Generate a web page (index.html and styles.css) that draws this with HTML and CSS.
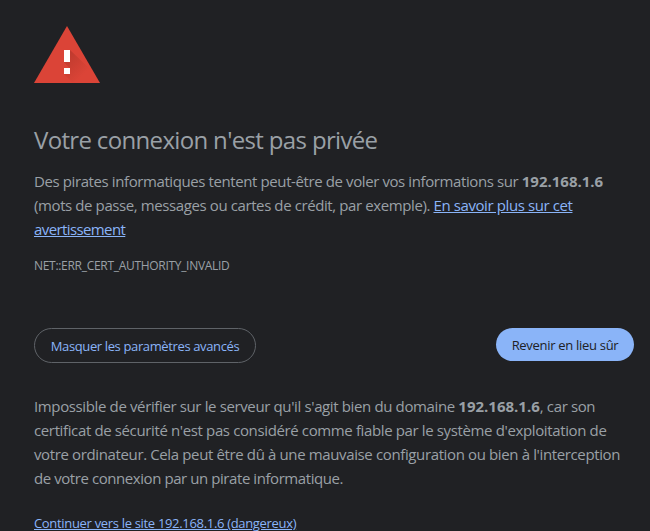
FILE: index.html
```html
<!DOCTYPE html>
<html lang="fr">
<head>
<meta charset="utf-8">
<title>Erreur liée à la confidentialité</title>
<link rel="stylesheet" href="styles.css">
</head>
<body>
<main class="interstitial">
  <svg class="icon" width="66" height="57" viewBox="0 0 66 57" aria-hidden="true">
    <defs>
      <linearGradient id="shade" gradientUnits="userSpaceOnUse" x1="32" y1="30" x2="50" y2="48">
        <stop offset="0" stop-color="#b8382c" stop-opacity=".8"/>
        <stop offset="1" stop-color="#b8382c" stop-opacity="0"/>
      </linearGradient>
    </defs>
    <path d="M33 0 66 57H0z" fill="#db4437"/>
    <path d="M36 24 60 47l6 10H49L30 36h6zM36 42 51 57H39l-9-9z" fill="url(#shade)"/>
    <path d="M30 24h6v12h-6zM30 42h6v6h-6z" fill="#fff"/>
  </svg>
  <h1>Votre connexion n'est pas privée</h1>
  <p class="text intro">
    <span class="line">Des pirates informatiques tentent peut-être de voler vos informations sur <strong>192.168.1.6</strong></span>
    <span class="line">(mots de passe, messages ou cartes de crédit, par exemple). <a href="#">En savoir plus sur cet</a></span>
    <span class="line last"><a href="#">avertissement</a></span>
  </p>
  <div class="code">NET::ERR_CERT_AUTHORITY_INVALID</div>
  <div class="actions">
    <button class="btn secondary">Masquer les paramètres avancés</button>
    <button class="btn primary">Revenir en lieu sûr</button>
  </div>
  <p class="text details">
    <span class="line">Impossible de vérifier sur le serveur qu'il s'agit bien du domaine <strong>192.168.1.6</strong>, car son</span>
    <span class="line">certificat de sécurité n'est pas considéré comme fiable par le système d'exploitation de</span>
    <span class="line">votre ordinateur. Cela peut être dû à une mauvaise configuration ou bien à l'interception</span>
    <span class="line last">de votre connexion par un pirate informatique.</span>
  </p>
  <a class="proceed" href="#">Continuer vers le site 192.168.1.6 (dangereux)</a>
</main>
</body>
</html>
```

FILE: styles.css
```css
body {
  margin: 0;
  height: 531px;
  overflow: hidden;
  background: #202124;
  color: #9aa0a6;
  font-family: "Open Sans", "Noto Sans", sans-serif;
}
.interstitial { padding: 26px 16px 0 34px; }
.icon { display: block; }
h1 {
  margin: 42px 0 14px;
  font-size: 24px;
  line-height: 30px;
  font-weight: 400;
  letter-spacing: -0.66px;
  white-space: nowrap;
}
.text { margin: 0; font-size: 15px; line-height: 24px; letter-spacing: -0.37px; }
.intro { letter-spacing: -0.4px; }
.intro .last { letter-spacing: -0.6px; }
.details .last { letter-spacing: -0.43px; }
.line { display: block; white-space: nowrap; }
strong { letter-spacing: 0; }
a { color: #8ab4f8; }
.code { margin-top: 17px; font-size: 12px; line-height: 16px; letter-spacing: -0.3px; }
.actions {
  display: flex;
  justify-content: space-between;
  align-items: flex-start;
  margin-top: 54px;
}
.btn {
  box-sizing: border-box;
  padding: 0;
  border-radius: 18px;
  font: 13px/18px "Open Sans", sans-serif;
  letter-spacing: -0.3px;
  white-space: nowrap;
}
.secondary { width: 222px; height: 35px; background: #202124; border: 1px solid #5f6368; color: #8ab4f8; letter-spacing: -0.37px; }
.primary { width: 138px; height: 33px; background: #8ab4f8; border: 0; color: #202124; }
.details { margin-top: 31px; }
.proceed { display: block; margin-top: 25px; font-size: 13px; line-height: 16px; letter-spacing: -0.32px; white-space: nowrap; }
```
